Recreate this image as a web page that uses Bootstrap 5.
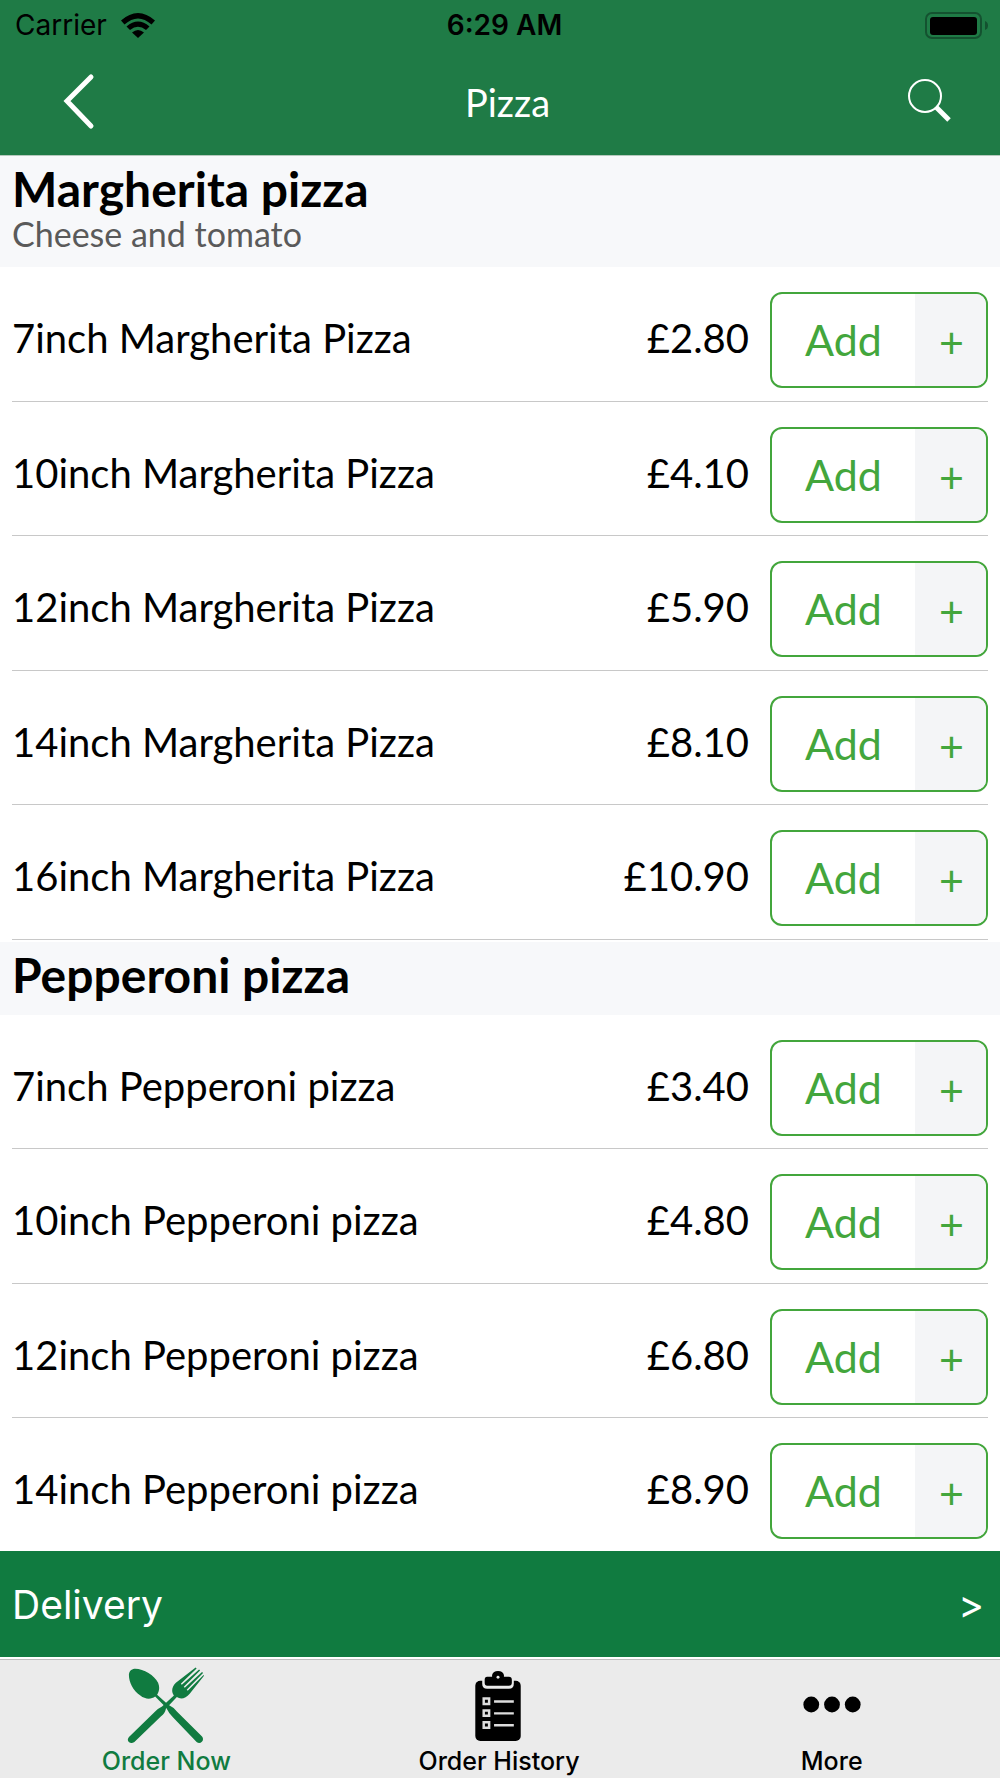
<!DOCTYPE html>
<html lang="en">
<head>
<meta charset="utf-8">
<meta name="viewport" content="width=device-width, initial-scale=1">
<title>Pizza</title>
<link href="https://cdn.jsdelivr.net/npm/bootstrap@5.3.0/dist/css/bootstrap.min.css" rel="stylesheet">
<style>
body { font-family: Lato, sans-serif; color: #000; background: #fff; line-height: 1.2; }
.ui-face { font-family: Inter, "Liberation Sans", sans-serif; }
.top-area { background: #1f7b46; border-bottom: 1px solid #b5c9bd; height: 156px; }
.status-line { height: 51px; padding: 0 12px 0 15px; font-size: 28px; }
.status-line strong { padding-left: 6px; }
.wifi-icon { margin-left: 14px; }
.title-line { height: 103px; padding: 0 32px 0 47px; }
.title-line h1 { font-size: 38px; font-weight: 400; margin: 0; color: #fff; }
.side { flex: 1 1 0; }
.group-head { background: #f7f8fa; padding: 5px 12px 0; }
.group-head h2 { font-size: 48px; line-height: 56px; font-weight: 700; margin: 0; }
.group-head p { font-size: 34px; line-height: 34px; margin: 0; color: #5a5a5a; }
.head-tall { height: 111px; }
.head-short { height: 73px; }
.dish { height: 134px; margin: 0 12px; padding-top: 25px; border-bottom: 1px solid #c8c8c8; font-size: 40px; }
.odd-tall .dish:nth-child(odd), .even-tall .dish:nth-child(even) { height: 135px; }
.odd-tall { padding-bottom: 2px; }
.dish-text { line-height: 92px; }
.price-text { margin-right: 21px; }
.add-btn { width: 218px; height: 96px; padding: 0; border: 2px solid #43a63c; border-radius: 12px; color: #43a63c; background: #fff; overflow: hidden; font-size: 43px; line-height: 48px; }
.add-btn .plus { width: 71px; padding: 3px 0 0 2px; background: #f4f5f7; }
.delivery { height: 106px; background: #107b40; color: #fff; padding: 2px 16px 0 12px; font-size: 39px; }
.delivery:hover { color: #fff; }
.tab-bar { background: #ebebeb; border-top: 1px solid #bdbdbd; margin-top: 2px; height: 119px; padding-right: 2px; }
.tab-link { color: #000; font-size: 25px; line-height: 34px; padding-top: 5px; font-weight: 500; }
.tab-link.active { color: #107b40; }
</style>
<script src="https://cdn.jsdelivr.net/npm/bootstrap@5.3.0/dist/js/bootstrap.bundle.min.js"></script>
</head>
<body>
<div class="d-flex flex-column vh-100 overflow-hidden">
  <header class="top-area flex-shrink-0">
    <div class="status-line ui-face d-flex align-items-center">
      <div class="side d-flex align-items-center">
        <span>Carrier</span>
        <svg class="wifi-icon" width="34" height="26" viewBox="0 0 34 26" aria-hidden="true"><path d="M0 7.500Q17-7.500 34 7.500L30.500 11.500Q17-.5 3.500 11.500Z"/><path d="M5.500 13.500Q17 3.500 28.500 13.500L25 17Q17 10.500 9 17Z"/><path d="M11 19.500Q17 14.500 23 19.500L17 25Z"/></svg>
      </div>
      <strong class="fw-semibold">6:29 AM</strong>
      <div class="side d-flex justify-content-end">
        <svg width="63" height="28" viewBox="0 0 63 28" aria-hidden="true"><rect x="1" y="1" width="55" height="25" rx="6" fill="none" stroke="#145230" stroke-width="2"/><rect x="5" y="5" width="47" height="18" rx="3"/><path d="M60 9Q63 10 63 13.500T60 18Z" fill="#145230"/></svg>
      </div>
    </div>
    <nav class="title-line d-flex align-items-center" aria-label="Page">
      <div class="side">
        <button type="button" class="btn p-0 border-0 d-flex" aria-label="Back"><svg width="64" height="64" viewBox="0 0 64 64" fill="none" stroke="#fff" stroke-width="5" stroke-linecap="round"><path d="M44 6 20 30 44 55"/></svg></button>
      </div>
      <h1>Pizza</h1>
      <div class="side d-flex justify-content-end">
        <button type="button" class="btn p-0 border-0 d-flex" aria-label="Search"><svg width="64" height="64" viewBox="0 0 64 64" fill="none" stroke="#fff"><circle cx="21" cy="25" r="16" stroke-width="2"/><path d="M32 36 45 49" stroke-width="5"/></svg></button>
      </div>
    </nav>
  </header>
  <main class="flex-grow-1 overflow-hidden">
    <section>
      <div class="group-head head-tall"><h2>Margherita pizza</h2><p>Cheese and tomato</p></div>
      <ul class="list-unstyled mb-0 odd-tall">
        <li class="dish d-flex align-items-start"><span class="dish-text flex-grow-1">7inch Margherita Pizza</span><span class="dish-text price-text">£2.80</span><button type="button" class="add-btn d-flex align-items-stretch"><span class="flex-grow-1 align-self-center">Add</span><span class="plus d-flex align-items-center justify-content-center">+</span></button></li>
        <li class="dish d-flex align-items-start"><span class="dish-text flex-grow-1">10inch Margherita Pizza</span><span class="dish-text price-text">£4.10</span><button type="button" class="add-btn d-flex align-items-stretch"><span class="flex-grow-1 align-self-center">Add</span><span class="plus d-flex align-items-center justify-content-center">+</span></button></li>
        <li class="dish d-flex align-items-start"><span class="dish-text flex-grow-1">12inch Margherita Pizza</span><span class="dish-text price-text">£5.90</span><button type="button" class="add-btn d-flex align-items-stretch"><span class="flex-grow-1 align-self-center">Add</span><span class="plus d-flex align-items-center justify-content-center">+</span></button></li>
        <li class="dish d-flex align-items-start"><span class="dish-text flex-grow-1">14inch Margherita Pizza</span><span class="dish-text price-text">£8.10</span><button type="button" class="add-btn d-flex align-items-stretch"><span class="flex-grow-1 align-self-center">Add</span><span class="plus d-flex align-items-center justify-content-center">+</span></button></li>
        <li class="dish d-flex align-items-start"><span class="dish-text flex-grow-1">16inch Margherita Pizza</span><span class="dish-text price-text">£10.90</span><button type="button" class="add-btn d-flex align-items-stretch"><span class="flex-grow-1 align-self-center">Add</span><span class="plus d-flex align-items-center justify-content-center">+</span></button></li>
      </ul>
    </section>
    <section>
      <div class="group-head head-short"><h2>Pepperoni pizza</h2></div>
      <ul class="list-unstyled mb-0 even-tall">
        <li class="dish d-flex align-items-start"><span class="dish-text flex-grow-1">7inch Pepperoni pizza</span><span class="dish-text price-text">£3.40</span><button type="button" class="add-btn d-flex align-items-stretch"><span class="flex-grow-1 align-self-center">Add</span><span class="plus d-flex align-items-center justify-content-center">+</span></button></li>
        <li class="dish d-flex align-items-start"><span class="dish-text flex-grow-1">10inch Pepperoni pizza</span><span class="dish-text price-text">£4.80</span><button type="button" class="add-btn d-flex align-items-stretch"><span class="flex-grow-1 align-self-center">Add</span><span class="plus d-flex align-items-center justify-content-center">+</span></button></li>
        <li class="dish d-flex align-items-start"><span class="dish-text flex-grow-1">12inch Pepperoni pizza</span><span class="dish-text price-text">£6.80</span><button type="button" class="add-btn d-flex align-items-stretch"><span class="flex-grow-1 align-self-center">Add</span><span class="plus d-flex align-items-center justify-content-center">+</span></button></li>
        <li class="dish d-flex align-items-start"><span class="dish-text flex-grow-1">14inch Pepperoni pizza</span><span class="dish-text price-text">£8.90</span><button type="button" class="add-btn d-flex align-items-stretch"><span class="flex-grow-1 align-self-center">Add</span><span class="plus d-flex align-items-center justify-content-center">+</span></button></li>
      </ul>
    </section>
  </main>
  <a href="#" class="delivery ui-face flex-shrink-0 d-flex align-items-center justify-content-between text-decoration-none"><span>Delivery</span><span>&gt;</span></a>
  <nav class="tab-bar ui-face flex-shrink-0 d-flex" aria-label="Main">
    <a href="#" class="tab-link active side d-flex flex-column align-items-center text-decoration-none" aria-current="page">
      <svg width="80" height="80" viewBox="0 0 80 80" fill="currentColor" aria-hidden="true"><path d="M7 4C16 3 28 10 32 18C34 23 33 27 31 30L42 40Q48 43 51 47L76 72C80 76 75 81 71 78L47 53Q43 49 40 43L29 32C25 35 19 35 14 31C6 26 2 16 2.500 9Q3 5 7 4Z"/><path d="M2.500 73 29 47Q32 44 36 42L48 31C45 27 46 22 50 18L70 2.500 71 3.500 55 19 56 20 73.500 4.500 74.500 5.500 58 22 59 23 76.500 7 77.500 8 61 25 62 26 78 10 78.500 11 64 29C60 34 55 35 51 32.500L40 44Q39 49 35 52L8 78C4 81-1 77 2.500 73Z"/></svg>
      <span>Order Now</span>
    </a>
    <a href="#" class="tab-link side d-flex flex-column align-items-center text-decoration-none">
      <svg width="80" height="80" viewBox="0 0 80 80" aria-hidden="true"><rect x="16" y="16" width="46" height="61" rx="5"/><path d="M23 15V19Q23 24 28 24H50Q55 24 55 19V15Z" fill="#ebebeb"/><path d="M28 12H33V10Q34 6 39 6T45 10V12H50Q53 12 53 15V18Q53 21 50 21H28Q25.500 21 25.500 18V15Q25.500 12 28 12Z"/><circle cx="39" cy="12.500" r="1.500" fill="#ebebeb"/><g fill="none" stroke="#ddd" stroke-width="2.500"><path d="M24.500 34H30V39.500H24.500ZM24.500 46H30V51.500H24.500ZM24.500 58H30V63.500H24.500ZM35 37H55M35 49H55M35 61H55"/></g></svg>
      <span>Order History</span>
    </a>
    <a href="#" class="tab-link side d-flex flex-column align-items-center text-decoration-none">
      <svg width="80" height="80" viewBox="0 0 80 80" aria-hidden="true"><circle cx="19" cy="40" r="8"/><circle cx="40" cy="40" r="8"/><circle cx="61" cy="40" r="8"/></svg>
      <span>More</span>
    </a>
  </nav>
</div>
</body>
</html>
